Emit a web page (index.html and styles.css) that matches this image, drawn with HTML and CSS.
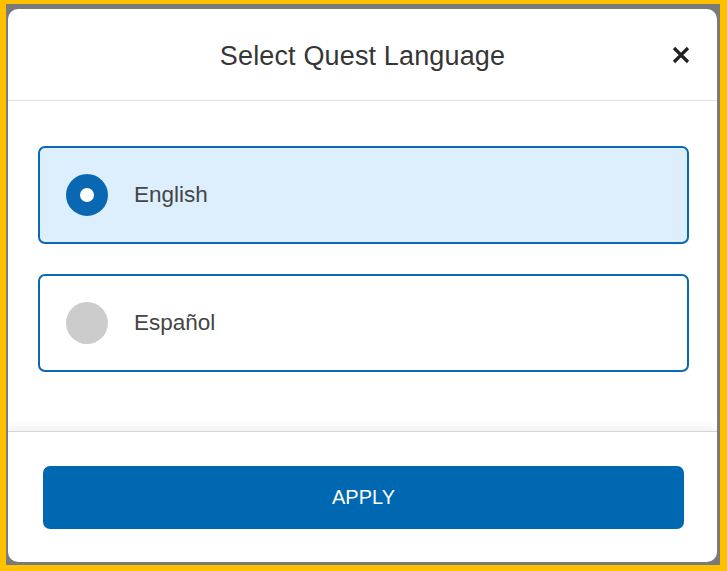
FILE: index.html
```html
<!DOCTYPE html>
<html lang="en">
<head>
<meta charset="utf-8">
<title>Select Quest Language</title>
<link rel="stylesheet" href="styles.css">
</head>
<body>
<div class="frame">
  <div class="backdrop">
    <div class="modal">
      <div class="modal-header">
        <h1 class="modal-title">Select Quest Language</h1>
        <button class="close" aria-label="Close">
          <svg width="18" height="18" viewBox="0 0 18 18"><path d="M2 2 L16 16 M16 2 L2 16" stroke="#222" stroke-width="3.2" stroke-linecap="butt"/></svg>
        </button>
      </div>
      <div class="modal-body">
        <label class="option selected">
          <span class="radio on"></span>
          <span class="option-label">English</span>
        </label>
        <label class="option">
          <span class="radio"></span>
          <span class="option-label">Español</span>
        </label>
      </div>
      <div class="modal-footer">
        <button class="apply">APPLY</button>
      </div>
    </div>
  </div>
</div>
</body>
</html>
```
FILE: styles.css
```css
html, body {
  margin: 0;
  padding: 0;
}
body {
  width: 727px;
  height: 571px;
  background: #ffc000;
  font-family: "Liberation Sans", Arial, sans-serif;
  overflow: hidden;
}
.frame {
  box-sizing: border-box;
  width: 727px;
  height: 571px;
  padding: 4px 7px 6px 6px;
}
.backdrop {
  box-sizing: border-box;
  height: 100%;
  background: #7a7a7a;
  padding: 5px 3px 3px 2px;
}
.modal {
  box-sizing: border-box;
  height: 100%;
  background: #fff;
  border-radius: 10px;
  display: flex;
  flex-direction: column;
  overflow: hidden;
}
.modal-header {
  height: 92px;
  flex: none;
  box-sizing: border-box;
  border-bottom: 1px solid #e3e3e3;
  display: flex;
  align-items: center;
  justify-content: center;
  position: relative;
}
.modal-title {
  margin: 0;
  font-weight: normal;
  font-size: 27px;
  color: #363636;
  letter-spacing: 0.15px;
  transform: translateY(2px);
}
.close {
  position: absolute;
  right: 27px;
  top: 37px;
  width: 18px;
  height: 18px;
  padding: 0;
  border: 0;
  background: none;
  display: flex;
}
.modal-body {
  flex: 1;
  padding: 45px 28px 0 30px;
  display: flex;
  flex-direction: column;
  gap: 30px;
}
.option {
  box-sizing: border-box;
  height: 98px;
  border: 2px solid #0d68b4;
  border-radius: 7px;
  background: #fff;
  display: flex;
  align-items: center;
  padding-left: 26px;
  gap: 26px;
}
.option.selected {
  background: #ddeffd;
}
.radio {
  box-sizing: border-box;
  width: 42px;
  height: 42px;
  border-radius: 50%;
  background: #cccccc;
  flex: none;
}
.radio.on {
  background: #fff;
  border: 14px solid #0a68b3;
}
.option-label {
  font-size: 22.5px;
  color: #454545;
}
.modal-footer {
  flex: none;
  border-top: 1px solid #d4d4d4;
  box-shadow: 0 -5px 8px rgba(0, 0, 0, 0.05);
  padding: 34px 33px 33px 35px;
  position: relative;
}
.apply {
  display: block;
  width: 100%;
  height: 63px;
  border: 0;
  border-radius: 7px;
  background: #0067b1;
  color: #fff;
  font-family: "Liberation Sans", Arial, sans-serif;
  font-size: 20px;
  padding: 0;
}
```
